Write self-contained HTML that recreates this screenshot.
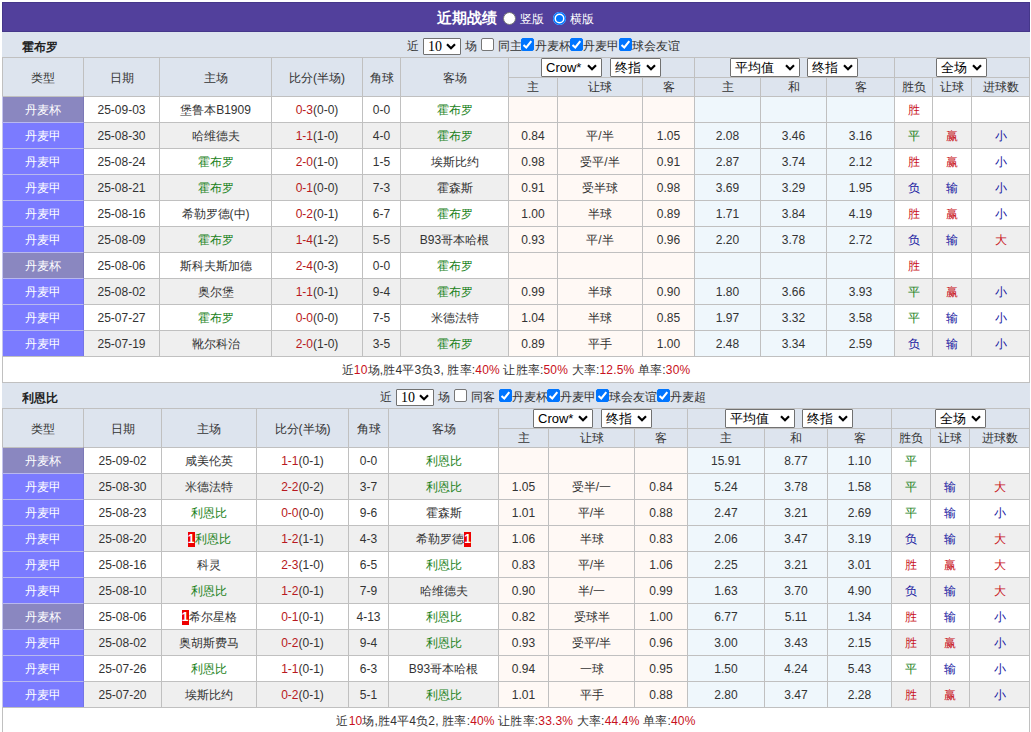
<!DOCTYPE html>
<html><head><meta charset="utf-8"><style>
html,body{margin:0;padding:0;background:#fff;width:1031px;height:732px;overflow:hidden;}
body{position:relative;font-family:"Liberation Sans",sans-serif;font-size:12px;color:#333;}
body>div,.abs{position:absolute;box-sizing:border-box;text-align:center;white-space:nowrap;overflow:hidden;}
.t{text-align:left!important;line-height:17px;overflow:visible!important;}
.sel{background:#fff;border:1px solid #717171;border-radius:1px;text-align:left!important;font-size:13px;color:#000;line-height:16px;}
.sel .st{position:absolute;left:4px;top:0;}
.sel .chev{position:absolute;right:4px;top:5px;}
.sel.sm .chev{top:4px;}
.sel .st{top:1px!important;}
.mono{font-family:"Liberation Serif",serif;font-size:14px;position:relative;top:-1px;}
.cb{width:13px;height:13px;border:1px solid #767676;border-radius:2px;background:#fff;}
.cb.on{background:#0075ff;border-color:#0075ff;}
.cb svg{position:absolute;left:-1px;top:-1px;}
.radio{width:13px;height:13px;border-radius:50%;background:#fff;border:1px solid #767676;}
.radio.on{border:none;background:#0075ff;box-shadow:inset 0 0 0 1.5px #0075ff, inset 0 0 0 3px #fff;}
.c{font-size:12px;}
.t.ttl .c{font-size:14.5px;}
.nm .c{font-size:12px;}
.t .c{font-size:12px;}
.sel .c{font-size:13px;}
.rc{display:inline-block;background:#e00;color:#fff;width:7px;height:15px;line-height:15px;font-size:12px;vertical-align:middle;font-weight:bold;text-align:center;}
</style></head><body>
<div style="left:2px;top:2px;width:1028px;height:30px;background:#52409c;border:1px solid #45378a;"></div><div style="left:2px;top:32px;width:1028px;height:1px;background:#e4e6fa;"></div><div class="t ttl" style="left:437px;top:9px;font-size:15px;font-weight:bold;color:#fff;line-height:18px"><span class="c">近期战绩</span></div><div class="radio" style="left:503px;top:12px;"></div><div class="t" style="left:520px;top:11px;color:#fff;"><span class="c">竖版</span></div><div class="radio on" style="left:553px;top:12px;"></div><div class="t" style="left:570px;top:11px;color:#fff;"><span class="c">横版</span></div><div style="left:2px;top:32px;width:1028px;height:25px;background:#dde4ee;"></div><div style="left:22px;top:32px;width:100px;height:25px;font-weight:bold;line-height:31px;color:#222;text-align:left;"><span class="nm"><span class="c">霍布罗</span></span></div><div style="left:2px;top:57px;width:82px;height:40px;background:#dde4ee;border:1px solid #c0c0c0;line-height:40px;"><span class="c">类型</span></div><div style="left:83px;top:57px;width:77px;height:40px;background:#dde4ee;border:1px solid #c0c0c0;line-height:40px;"><span class="c">日期</span></div><div style="left:159px;top:57px;width:113px;height:40px;background:#dde4ee;border:1px solid #c0c0c0;line-height:40px;"><span class="c">主场</span></div><div style="left:271px;top:57px;width:92px;height:40px;background:#dde4ee;border:1px solid #c0c0c0;line-height:40px;"><span class="c">比分</span>(<span class="c">半场</span>)</div><div style="left:362px;top:57px;width:39px;height:40px;background:#dde4ee;border:1px solid #c0c0c0;line-height:40px;"><span class="c">角球</span></div><div style="left:400px;top:57px;width:109px;height:40px;background:#dde4ee;border:1px solid #c0c0c0;line-height:40px;"><span class="c">客场</span></div><div style="left:508px;top:57px;width:187px;height:21px;background:#dde4ee;border:1px solid #c0c0c0;line-height:21px;"></div><div style="left:694px;top:57px;width:201px;height:21px;background:#dde4ee;border:1px solid #c0c0c0;line-height:21px;"></div><div style="left:894px;top:57px;width:136px;height:21px;background:#dde4ee;border:1px solid #c0c0c0;line-height:21px;"></div><div style="left:508px;top:77px;width:50px;height:20px;background:#dde4ee;border:1px solid #c0c0c0;line-height:20px;line-height:19px;"><span class="c">主</span></div><div style="left:557px;top:77px;width:86px;height:20px;background:#dde4ee;border:1px solid #c0c0c0;line-height:20px;line-height:19px;"><span class="c">让球</span></div><div style="left:642px;top:77px;width:53px;height:20px;background:#dde4ee;border:1px solid #c0c0c0;line-height:20px;line-height:19px;"><span class="c">客</span></div><div style="left:694px;top:77px;width:67px;height:20px;background:#dde4ee;border:1px solid #c0c0c0;line-height:20px;line-height:19px;"><span class="c">主</span></div><div style="left:760px;top:77px;width:67px;height:20px;background:#dde4ee;border:1px solid #c0c0c0;line-height:20px;line-height:19px;"><span class="c">和</span></div><div style="left:826px;top:77px;width:69px;height:20px;background:#dde4ee;border:1px solid #c0c0c0;line-height:20px;line-height:19px;"><span class="c">客</span></div><div style="left:894px;top:77px;width:39px;height:20px;background:#dde4ee;border:1px solid #c0c0c0;line-height:20px;line-height:19px;"><span class="c">胜负</span></div><div style="left:932px;top:77px;width:40px;height:20px;background:#dde4ee;border:1px solid #c0c0c0;line-height:20px;line-height:19px;"><span class="c">让球</span></div><div style="left:971px;top:77px;width:59px;height:20px;background:#dde4ee;border:1px solid #c0c0c0;line-height:20px;line-height:19px;"><span class="c">进球数</span></div><div style="left:83px;top:96px;width:77px;height:27px;background:#ffffff;border:1px solid #c0c0c0;line-height:27px;">25-09-03</div><div style="left:2px;top:96px;width:82px;height:27px;background:#8a87c0;border:1px solid #c0c0c0;line-height:27px;color:#fff;border-color:#c0c0c0 #7c79b6 #b8b8ee #c4c4ee;"><span class="c">丹麦杯</span></div><div style="left:159px;top:96px;width:113px;height:27px;background:#ffffff;border:1px solid #c0c0c0;line-height:27px;"><span class="c">堡鲁本</span>B1909</div><div style="left:271px;top:96px;width:92px;height:27px;background:#ffffff;border:1px solid #c0c0c0;line-height:27px;"><span style="color:#b81820">0-3</span>(0-0)</div><div style="left:362px;top:96px;width:39px;height:27px;background:#ffffff;border:1px solid #c0c0c0;line-height:27px;">0-0</div><div style="left:400px;top:96px;width:109px;height:27px;background:#ffffff;border:1px solid #c0c0c0;line-height:27px;"><span style="color:#1a821a"><span class="c">霍布罗</span></span></div><div style="left:508px;top:96px;width:50px;height:27px;background:#fff9f5;border:1px solid #c0c0c0;line-height:27px;"></div><div style="left:557px;top:96px;width:86px;height:27px;background:#fff9f5;border:1px solid #c0c0c0;line-height:27px;"></div><div style="left:642px;top:96px;width:53px;height:27px;background:#fff9f5;border:1px solid #c0c0c0;line-height:27px;"></div><div style="left:694px;top:96px;width:67px;height:27px;background:#eff7fc;border:1px solid #c0c0c0;line-height:27px;"></div><div style="left:760px;top:96px;width:67px;height:27px;background:#eff7fc;border:1px solid #c0c0c0;line-height:27px;"></div><div style="left:826px;top:96px;width:69px;height:27px;background:#eff7fc;border:1px solid #c0c0c0;line-height:27px;"></div><div style="left:894px;top:96px;width:39px;height:27px;background:#ffffff;border:1px solid #c0c0c0;line-height:27px;"><span style="color:#c81020"><span class="c">胜</span></span></div><div style="left:932px;top:96px;width:40px;height:27px;background:#ffffff;border:1px solid #c0c0c0;line-height:27px;"></div><div style="left:971px;top:96px;width:59px;height:27px;background:#ffffff;border:1px solid #c0c0c0;line-height:27px;"></div><div style="left:83px;top:122px;width:77px;height:27px;background:#efefef;border:1px solid #c0c0c0;line-height:27px;">25-08-30</div><div style="left:2px;top:122px;width:82px;height:27px;background:#7b7bff;border:1px solid #c0c0c0;line-height:27px;color:#fff;border-color:#b8b8ee #7474e6 #b8b8ee #c4c4ee;"><span class="c">丹麦甲</span></div><div style="left:159px;top:122px;width:113px;height:27px;background:#efefef;border:1px solid #c0c0c0;line-height:27px;"><span class="c">哈维德夫</span></div><div style="left:271px;top:122px;width:92px;height:27px;background:#efefef;border:1px solid #c0c0c0;line-height:27px;"><span style="color:#b81820">1-1</span>(1-0)</div><div style="left:362px;top:122px;width:39px;height:27px;background:#efefef;border:1px solid #c0c0c0;line-height:27px;">4-0</div><div style="left:400px;top:122px;width:109px;height:27px;background:#efefef;border:1px solid #c0c0c0;line-height:27px;"><span style="color:#1a821a"><span class="c">霍布罗</span></span></div><div style="left:508px;top:122px;width:50px;height:27px;background:#fff9f5;border:1px solid #c0c0c0;line-height:27px;">0.84</div><div style="left:557px;top:122px;width:86px;height:27px;background:#fff9f5;border:1px solid #c0c0c0;line-height:27px;"><span class="c">平</span>/<span class="c">半</span></div><div style="left:642px;top:122px;width:53px;height:27px;background:#fff9f5;border:1px solid #c0c0c0;line-height:27px;">1.05</div><div style="left:694px;top:122px;width:67px;height:27px;background:#eff7fc;border:1px solid #c0c0c0;line-height:27px;">2.08</div><div style="left:760px;top:122px;width:67px;height:27px;background:#eff7fc;border:1px solid #c0c0c0;line-height:27px;">3.46</div><div style="left:826px;top:122px;width:69px;height:27px;background:#eff7fc;border:1px solid #c0c0c0;line-height:27px;">3.16</div><div style="left:894px;top:122px;width:39px;height:27px;background:#efefef;border:1px solid #c0c0c0;line-height:27px;"><span style="color:#1a821a"><span class="c">平</span></span></div><div style="left:932px;top:122px;width:40px;height:27px;background:#efefef;border:1px solid #c0c0c0;line-height:27px;"><span style="color:#c81020"><span class="c">赢</span></span></div><div style="left:971px;top:122px;width:59px;height:27px;background:#efefef;border:1px solid #c0c0c0;line-height:27px;"><span style="color:#1515a0"><span class="c">小</span></span></div><div style="left:83px;top:148px;width:77px;height:27px;background:#ffffff;border:1px solid #c0c0c0;line-height:27px;">25-08-24</div><div style="left:2px;top:148px;width:82px;height:27px;background:#7b7bff;border:1px solid #c0c0c0;line-height:27px;color:#fff;border-color:#b8b8ee #7474e6 #b8b8ee #c4c4ee;"><span class="c">丹麦甲</span></div><div style="left:159px;top:148px;width:113px;height:27px;background:#ffffff;border:1px solid #c0c0c0;line-height:27px;"><span style="color:#1a821a"><span class="c">霍布罗</span></span></div><div style="left:271px;top:148px;width:92px;height:27px;background:#ffffff;border:1px solid #c0c0c0;line-height:27px;"><span style="color:#b81820">2-0</span>(1-0)</div><div style="left:362px;top:148px;width:39px;height:27px;background:#ffffff;border:1px solid #c0c0c0;line-height:27px;">1-5</div><div style="left:400px;top:148px;width:109px;height:27px;background:#ffffff;border:1px solid #c0c0c0;line-height:27px;"><span class="c">埃斯比约</span></div><div style="left:508px;top:148px;width:50px;height:27px;background:#fff9f5;border:1px solid #c0c0c0;line-height:27px;">0.98</div><div style="left:557px;top:148px;width:86px;height:27px;background:#fff9f5;border:1px solid #c0c0c0;line-height:27px;"><span class="c">受平</span>/<span class="c">半</span></div><div style="left:642px;top:148px;width:53px;height:27px;background:#fff9f5;border:1px solid #c0c0c0;line-height:27px;">0.91</div><div style="left:694px;top:148px;width:67px;height:27px;background:#eff7fc;border:1px solid #c0c0c0;line-height:27px;">2.87</div><div style="left:760px;top:148px;width:67px;height:27px;background:#eff7fc;border:1px solid #c0c0c0;line-height:27px;">3.74</div><div style="left:826px;top:148px;width:69px;height:27px;background:#eff7fc;border:1px solid #c0c0c0;line-height:27px;">2.12</div><div style="left:894px;top:148px;width:39px;height:27px;background:#ffffff;border:1px solid #c0c0c0;line-height:27px;"><span style="color:#c81020"><span class="c">胜</span></span></div><div style="left:932px;top:148px;width:40px;height:27px;background:#ffffff;border:1px solid #c0c0c0;line-height:27px;"><span style="color:#c81020"><span class="c">赢</span></span></div><div style="left:971px;top:148px;width:59px;height:27px;background:#ffffff;border:1px solid #c0c0c0;line-height:27px;"><span style="color:#1515a0"><span class="c">小</span></span></div><div style="left:83px;top:174px;width:77px;height:27px;background:#efefef;border:1px solid #c0c0c0;line-height:27px;">25-08-21</div><div style="left:2px;top:174px;width:82px;height:27px;background:#7b7bff;border:1px solid #c0c0c0;line-height:27px;color:#fff;border-color:#b8b8ee #7474e6 #b8b8ee #c4c4ee;"><span class="c">丹麦甲</span></div><div style="left:159px;top:174px;width:113px;height:27px;background:#efefef;border:1px solid #c0c0c0;line-height:27px;"><span style="color:#1a821a"><span class="c">霍布罗</span></span></div><div style="left:271px;top:174px;width:92px;height:27px;background:#efefef;border:1px solid #c0c0c0;line-height:27px;"><span style="color:#b81820">0-1</span>(0-0)</div><div style="left:362px;top:174px;width:39px;height:27px;background:#efefef;border:1px solid #c0c0c0;line-height:27px;">7-3</div><div style="left:400px;top:174px;width:109px;height:27px;background:#efefef;border:1px solid #c0c0c0;line-height:27px;"><span class="c">霍森斯</span></div><div style="left:508px;top:174px;width:50px;height:27px;background:#fff9f5;border:1px solid #c0c0c0;line-height:27px;">0.91</div><div style="left:557px;top:174px;width:86px;height:27px;background:#fff9f5;border:1px solid #c0c0c0;line-height:27px;"><span class="c">受半球</span></div><div style="left:642px;top:174px;width:53px;height:27px;background:#fff9f5;border:1px solid #c0c0c0;line-height:27px;">0.98</div><div style="left:694px;top:174px;width:67px;height:27px;background:#eff7fc;border:1px solid #c0c0c0;line-height:27px;">3.69</div><div style="left:760px;top:174px;width:67px;height:27px;background:#eff7fc;border:1px solid #c0c0c0;line-height:27px;">3.29</div><div style="left:826px;top:174px;width:69px;height:27px;background:#eff7fc;border:1px solid #c0c0c0;line-height:27px;">1.95</div><div style="left:894px;top:174px;width:39px;height:27px;background:#efefef;border:1px solid #c0c0c0;line-height:27px;"><span style="color:#1515a0"><span class="c">负</span></span></div><div style="left:932px;top:174px;width:40px;height:27px;background:#efefef;border:1px solid #c0c0c0;line-height:27px;"><span style="color:#1515a0"><span class="c">输</span></span></div><div style="left:971px;top:174px;width:59px;height:27px;background:#efefef;border:1px solid #c0c0c0;line-height:27px;"><span style="color:#1515a0"><span class="c">小</span></span></div><div style="left:83px;top:200px;width:77px;height:27px;background:#ffffff;border:1px solid #c0c0c0;line-height:27px;">25-08-16</div><div style="left:2px;top:200px;width:82px;height:27px;background:#7b7bff;border:1px solid #c0c0c0;line-height:27px;color:#fff;border-color:#b8b8ee #7474e6 #b8b8ee #c4c4ee;"><span class="c">丹麦甲</span></div><div style="left:159px;top:200px;width:113px;height:27px;background:#ffffff;border:1px solid #c0c0c0;line-height:27px;"><span class="c">希勒罗德</span>(<span class="c">中</span>)</div><div style="left:271px;top:200px;width:92px;height:27px;background:#ffffff;border:1px solid #c0c0c0;line-height:27px;"><span style="color:#b81820">0-2</span>(0-1)</div><div style="left:362px;top:200px;width:39px;height:27px;background:#ffffff;border:1px solid #c0c0c0;line-height:27px;">6-7</div><div style="left:400px;top:200px;width:109px;height:27px;background:#ffffff;border:1px solid #c0c0c0;line-height:27px;"><span style="color:#1a821a"><span class="c">霍布罗</span></span></div><div style="left:508px;top:200px;width:50px;height:27px;background:#fff9f5;border:1px solid #c0c0c0;line-height:27px;">1.00</div><div style="left:557px;top:200px;width:86px;height:27px;background:#fff9f5;border:1px solid #c0c0c0;line-height:27px;"><span class="c">半球</span></div><div style="left:642px;top:200px;width:53px;height:27px;background:#fff9f5;border:1px solid #c0c0c0;line-height:27px;">0.89</div><div style="left:694px;top:200px;width:67px;height:27px;background:#eff7fc;border:1px solid #c0c0c0;line-height:27px;">1.71</div><div style="left:760px;top:200px;width:67px;height:27px;background:#eff7fc;border:1px solid #c0c0c0;line-height:27px;">3.84</div><div style="left:826px;top:200px;width:69px;height:27px;background:#eff7fc;border:1px solid #c0c0c0;line-height:27px;">4.19</div><div style="left:894px;top:200px;width:39px;height:27px;background:#ffffff;border:1px solid #c0c0c0;line-height:27px;"><span style="color:#c81020"><span class="c">胜</span></span></div><div style="left:932px;top:200px;width:40px;height:27px;background:#ffffff;border:1px solid #c0c0c0;line-height:27px;"><span style="color:#c81020"><span class="c">赢</span></span></div><div style="left:971px;top:200px;width:59px;height:27px;background:#ffffff;border:1px solid #c0c0c0;line-height:27px;"><span style="color:#1515a0"><span class="c">小</span></span></div><div style="left:83px;top:226px;width:77px;height:27px;background:#efefef;border:1px solid #c0c0c0;line-height:27px;">25-08-09</div><div style="left:2px;top:226px;width:82px;height:27px;background:#7b7bff;border:1px solid #c0c0c0;line-height:27px;color:#fff;border-color:#b8b8ee #7474e6 #b8b8ee #c4c4ee;"><span class="c">丹麦甲</span></div><div style="left:159px;top:226px;width:113px;height:27px;background:#efefef;border:1px solid #c0c0c0;line-height:27px;"><span style="color:#1a821a"><span class="c">霍布罗</span></span></div><div style="left:271px;top:226px;width:92px;height:27px;background:#efefef;border:1px solid #c0c0c0;line-height:27px;"><span style="color:#b81820">1-4</span>(1-2)</div><div style="left:362px;top:226px;width:39px;height:27px;background:#efefef;border:1px solid #c0c0c0;line-height:27px;">5-5</div><div style="left:400px;top:226px;width:109px;height:27px;background:#efefef;border:1px solid #c0c0c0;line-height:27px;">B93<span class="c">哥本哈根</span></div><div style="left:508px;top:226px;width:50px;height:27px;background:#fff9f5;border:1px solid #c0c0c0;line-height:27px;">0.93</div><div style="left:557px;top:226px;width:86px;height:27px;background:#fff9f5;border:1px solid #c0c0c0;line-height:27px;"><span class="c">平</span>/<span class="c">半</span></div><div style="left:642px;top:226px;width:53px;height:27px;background:#fff9f5;border:1px solid #c0c0c0;line-height:27px;">0.96</div><div style="left:694px;top:226px;width:67px;height:27px;background:#eff7fc;border:1px solid #c0c0c0;line-height:27px;">2.20</div><div style="left:760px;top:226px;width:67px;height:27px;background:#eff7fc;border:1px solid #c0c0c0;line-height:27px;">3.78</div><div style="left:826px;top:226px;width:69px;height:27px;background:#eff7fc;border:1px solid #c0c0c0;line-height:27px;">2.72</div><div style="left:894px;top:226px;width:39px;height:27px;background:#efefef;border:1px solid #c0c0c0;line-height:27px;"><span style="color:#1515a0"><span class="c">负</span></span></div><div style="left:932px;top:226px;width:40px;height:27px;background:#efefef;border:1px solid #c0c0c0;line-height:27px;"><span style="color:#1515a0"><span class="c">输</span></span></div><div style="left:971px;top:226px;width:59px;height:27px;background:#efefef;border:1px solid #c0c0c0;line-height:27px;"><span style="color:#c81020"><span class="c">大</span></span></div><div style="left:83px;top:252px;width:77px;height:27px;background:#ffffff;border:1px solid #c0c0c0;line-height:27px;">25-08-06</div><div style="left:2px;top:252px;width:82px;height:27px;background:#8a87c0;border:1px solid #c0c0c0;line-height:27px;color:#fff;border-color:#b8b8ee #7c79b6 #b8b8ee #c4c4ee;"><span class="c">丹麦杯</span></div><div style="left:159px;top:252px;width:113px;height:27px;background:#ffffff;border:1px solid #c0c0c0;line-height:27px;"><span class="c">斯科夫斯加德</span></div><div style="left:271px;top:252px;width:92px;height:27px;background:#ffffff;border:1px solid #c0c0c0;line-height:27px;"><span style="color:#b81820">2-4</span>(0-3)</div><div style="left:362px;top:252px;width:39px;height:27px;background:#ffffff;border:1px solid #c0c0c0;line-height:27px;">0-0</div><div style="left:400px;top:252px;width:109px;height:27px;background:#ffffff;border:1px solid #c0c0c0;line-height:27px;"><span style="color:#1a821a"><span class="c">霍布罗</span></span></div><div style="left:508px;top:252px;width:50px;height:27px;background:#fff9f5;border:1px solid #c0c0c0;line-height:27px;"></div><div style="left:557px;top:252px;width:86px;height:27px;background:#fff9f5;border:1px solid #c0c0c0;line-height:27px;"></div><div style="left:642px;top:252px;width:53px;height:27px;background:#fff9f5;border:1px solid #c0c0c0;line-height:27px;"></div><div style="left:694px;top:252px;width:67px;height:27px;background:#eff7fc;border:1px solid #c0c0c0;line-height:27px;"></div><div style="left:760px;top:252px;width:67px;height:27px;background:#eff7fc;border:1px solid #c0c0c0;line-height:27px;"></div><div style="left:826px;top:252px;width:69px;height:27px;background:#eff7fc;border:1px solid #c0c0c0;line-height:27px;"></div><div style="left:894px;top:252px;width:39px;height:27px;background:#ffffff;border:1px solid #c0c0c0;line-height:27px;"><span style="color:#c81020"><span class="c">胜</span></span></div><div style="left:932px;top:252px;width:40px;height:27px;background:#ffffff;border:1px solid #c0c0c0;line-height:27px;"></div><div style="left:971px;top:252px;width:59px;height:27px;background:#ffffff;border:1px solid #c0c0c0;line-height:27px;"></div><div style="left:83px;top:278px;width:77px;height:27px;background:#efefef;border:1px solid #c0c0c0;line-height:27px;">25-08-02</div><div style="left:2px;top:278px;width:82px;height:27px;background:#7b7bff;border:1px solid #c0c0c0;line-height:27px;color:#fff;border-color:#b8b8ee #7474e6 #b8b8ee #c4c4ee;"><span class="c">丹麦甲</span></div><div style="left:159px;top:278px;width:113px;height:27px;background:#efefef;border:1px solid #c0c0c0;line-height:27px;"><span class="c">奥尔堡</span></div><div style="left:271px;top:278px;width:92px;height:27px;background:#efefef;border:1px solid #c0c0c0;line-height:27px;"><span style="color:#b81820">1-1</span>(0-1)</div><div style="left:362px;top:278px;width:39px;height:27px;background:#efefef;border:1px solid #c0c0c0;line-height:27px;">9-4</div><div style="left:400px;top:278px;width:109px;height:27px;background:#efefef;border:1px solid #c0c0c0;line-height:27px;"><span style="color:#1a821a"><span class="c">霍布罗</span></span></div><div style="left:508px;top:278px;width:50px;height:27px;background:#fff9f5;border:1px solid #c0c0c0;line-height:27px;">0.99</div><div style="left:557px;top:278px;width:86px;height:27px;background:#fff9f5;border:1px solid #c0c0c0;line-height:27px;"><span class="c">半球</span></div><div style="left:642px;top:278px;width:53px;height:27px;background:#fff9f5;border:1px solid #c0c0c0;line-height:27px;">0.90</div><div style="left:694px;top:278px;width:67px;height:27px;background:#eff7fc;border:1px solid #c0c0c0;line-height:27px;">1.80</div><div style="left:760px;top:278px;width:67px;height:27px;background:#eff7fc;border:1px solid #c0c0c0;line-height:27px;">3.66</div><div style="left:826px;top:278px;width:69px;height:27px;background:#eff7fc;border:1px solid #c0c0c0;line-height:27px;">3.93</div><div style="left:894px;top:278px;width:39px;height:27px;background:#efefef;border:1px solid #c0c0c0;line-height:27px;"><span style="color:#1a821a"><span class="c">平</span></span></div><div style="left:932px;top:278px;width:40px;height:27px;background:#efefef;border:1px solid #c0c0c0;line-height:27px;"><span style="color:#c81020"><span class="c">赢</span></span></div><div style="left:971px;top:278px;width:59px;height:27px;background:#efefef;border:1px solid #c0c0c0;line-height:27px;"><span style="color:#1515a0"><span class="c">小</span></span></div><div style="left:83px;top:304px;width:77px;height:27px;background:#ffffff;border:1px solid #c0c0c0;line-height:27px;">25-07-27</div><div style="left:2px;top:304px;width:82px;height:27px;background:#7b7bff;border:1px solid #c0c0c0;line-height:27px;color:#fff;border-color:#b8b8ee #7474e6 #b8b8ee #c4c4ee;"><span class="c">丹麦甲</span></div><div style="left:159px;top:304px;width:113px;height:27px;background:#ffffff;border:1px solid #c0c0c0;line-height:27px;"><span style="color:#1a821a"><span class="c">霍布罗</span></span></div><div style="left:271px;top:304px;width:92px;height:27px;background:#ffffff;border:1px solid #c0c0c0;line-height:27px;"><span style="color:#b81820">0-0</span>(0-0)</div><div style="left:362px;top:304px;width:39px;height:27px;background:#ffffff;border:1px solid #c0c0c0;line-height:27px;">7-5</div><div style="left:400px;top:304px;width:109px;height:27px;background:#ffffff;border:1px solid #c0c0c0;line-height:27px;"><span class="c">米德法特</span></div><div style="left:508px;top:304px;width:50px;height:27px;background:#fff9f5;border:1px solid #c0c0c0;line-height:27px;">1.04</div><div style="left:557px;top:304px;width:86px;height:27px;background:#fff9f5;border:1px solid #c0c0c0;line-height:27px;"><span class="c">半球</span></div><div style="left:642px;top:304px;width:53px;height:27px;background:#fff9f5;border:1px solid #c0c0c0;line-height:27px;">0.85</div><div style="left:694px;top:304px;width:67px;height:27px;background:#eff7fc;border:1px solid #c0c0c0;line-height:27px;">1.97</div><div style="left:760px;top:304px;width:67px;height:27px;background:#eff7fc;border:1px solid #c0c0c0;line-height:27px;">3.32</div><div style="left:826px;top:304px;width:69px;height:27px;background:#eff7fc;border:1px solid #c0c0c0;line-height:27px;">3.58</div><div style="left:894px;top:304px;width:39px;height:27px;background:#ffffff;border:1px solid #c0c0c0;line-height:27px;"><span style="color:#1a821a"><span class="c">平</span></span></div><div style="left:932px;top:304px;width:40px;height:27px;background:#ffffff;border:1px solid #c0c0c0;line-height:27px;"><span style="color:#1515a0"><span class="c">输</span></span></div><div style="left:971px;top:304px;width:59px;height:27px;background:#ffffff;border:1px solid #c0c0c0;line-height:27px;"><span style="color:#1515a0"><span class="c">小</span></span></div><div style="left:83px;top:330px;width:77px;height:27px;background:#efefef;border:1px solid #c0c0c0;line-height:27px;">25-07-19</div><div style="left:2px;top:330px;width:82px;height:27px;background:#7b7bff;border:1px solid #c0c0c0;line-height:27px;color:#fff;border-color:#b8b8ee #7474e6 #b8b8ee #c4c4ee;"><span class="c">丹麦甲</span></div><div style="left:159px;top:330px;width:113px;height:27px;background:#efefef;border:1px solid #c0c0c0;line-height:27px;"><span class="c">靴尔科治</span></div><div style="left:271px;top:330px;width:92px;height:27px;background:#efefef;border:1px solid #c0c0c0;line-height:27px;"><span style="color:#b81820">2-0</span>(1-0)</div><div style="left:362px;top:330px;width:39px;height:27px;background:#efefef;border:1px solid #c0c0c0;line-height:27px;">3-5</div><div style="left:400px;top:330px;width:109px;height:27px;background:#efefef;border:1px solid #c0c0c0;line-height:27px;"><span style="color:#1a821a"><span class="c">霍布罗</span></span></div><div style="left:508px;top:330px;width:50px;height:27px;background:#fff9f5;border:1px solid #c0c0c0;line-height:27px;">0.89</div><div style="left:557px;top:330px;width:86px;height:27px;background:#fff9f5;border:1px solid #c0c0c0;line-height:27px;"><span class="c">平手</span></div><div style="left:642px;top:330px;width:53px;height:27px;background:#fff9f5;border:1px solid #c0c0c0;line-height:27px;">1.00</div><div style="left:694px;top:330px;width:67px;height:27px;background:#eff7fc;border:1px solid #c0c0c0;line-height:27px;">2.48</div><div style="left:760px;top:330px;width:67px;height:27px;background:#eff7fc;border:1px solid #c0c0c0;line-height:27px;">3.34</div><div style="left:826px;top:330px;width:69px;height:27px;background:#eff7fc;border:1px solid #c0c0c0;line-height:27px;">2.59</div><div style="left:894px;top:330px;width:39px;height:27px;background:#efefef;border:1px solid #c0c0c0;line-height:27px;"><span style="color:#1515a0"><span class="c">负</span></span></div><div style="left:932px;top:330px;width:40px;height:27px;background:#efefef;border:1px solid #c0c0c0;line-height:27px;"><span style="color:#1515a0"><span class="c">输</span></span></div><div style="left:971px;top:330px;width:59px;height:27px;background:#efefef;border:1px solid #c0c0c0;line-height:27px;"><span style="color:#1515a0"><span class="c">小</span></span></div><div style="left:2px;top:356px;width:1028px;height:27px;background:#fff;border:1px solid #c0c0c0;line-height:27px;letter-spacing:0.18px;"><span class="c">近</span><span style="color:#c81020">10</span><span class="c">场</span>,<span class="c">胜</span>4<span class="c">平</span>3<span class="c">负</span>3, <span class="c">胜率</span>:<span style="color:#c81020">40%</span> <span class="c">让胜率</span>:<span style="color:#c81020">50%</span> <span class="c">大率</span>:<span style="color:#c81020">12.5%</span> <span class="c">单率</span>:<span style="color:#c81020">30%</span></div><div class="t" style="left:407px;top:38px;"><span class="c">近</span></div><div class="sel sm" style="left:423px;top:38px;width:38px;height:17px;"><span class="st"><span class="mono">10</span></span><svg class="chev" width="10" height="7" viewBox="0 0 10 7"><path d="M1 1.3 L5 5.2 L9 1.3" stroke="#000" stroke-width="2.2" fill="none"/></svg></div><div class="t" style="left:465px;top:38px;"><span class="c">场</span></div><div class="cb" style="left:481px;top:38px;"></div><div class="t" style="left:498px;top:38px;"><span class="c">同主</span></div><div class="cb on" style="left:521px;top:38px;"><svg width="13" height="13" viewBox="0 0 13 13"><path d="M2.5 7 L5.3 9.5 L10.3 3.2" stroke="#fff" stroke-width="2.1" fill="none"/></svg></div><div class="t" style="left:535px;top:38px;"><span class="c">丹麦杯</span></div><div class="cb on" style="left:570px;top:38px;"><svg width="13" height="13" viewBox="0 0 13 13"><path d="M2.5 7 L5.3 9.5 L10.3 3.2" stroke="#fff" stroke-width="2.1" fill="none"/></svg></div><div class="t" style="left:583px;top:38px;"><span class="c">丹麦甲</span></div><div class="cb on" style="left:619px;top:38px;"><svg width="13" height="13" viewBox="0 0 13 13"><path d="M2.5 7 L5.3 9.5 L10.3 3.2" stroke="#fff" stroke-width="2.1" fill="none"/></svg></div><div class="t" style="left:632px;top:38px;"><span class="c">球会友谊</span></div><div class="sel" style="left:541px;top:58px;width:61px;height:19px;"><span class="st">Crow*</span><svg class="chev" width="10" height="7" viewBox="0 0 10 7"><path d="M1 1.3 L5 5.2 L9 1.3" stroke="#000" stroke-width="2.2" fill="none"/></svg></div><div class="sel" style="left:610px;top:58px;width:51px;height:19px;"><span class="st"><span class="c">终指</span></span><svg class="chev" width="10" height="7" viewBox="0 0 10 7"><path d="M1 1.3 L5 5.2 L9 1.3" stroke="#000" stroke-width="2.2" fill="none"/></svg></div><div class="sel" style="left:730px;top:58px;width:70px;height:19px;"><span class="st"><span class="c">平均值</span></span><svg class="chev" width="10" height="7" viewBox="0 0 10 7"><path d="M1 1.3 L5 5.2 L9 1.3" stroke="#000" stroke-width="2.2" fill="none"/></svg></div><div class="sel" style="left:807px;top:58px;width:51px;height:19px;"><span class="st"><span class="c">终指</span></span><svg class="chev" width="10" height="7" viewBox="0 0 10 7"><path d="M1 1.3 L5 5.2 L9 1.3" stroke="#000" stroke-width="2.2" fill="none"/></svg></div><div class="sel" style="left:936px;top:58px;width:51px;height:19px;"><span class="st"><span class="c">全场</span></span><svg class="chev" width="10" height="7" viewBox="0 0 10 7"><path d="M1 1.3 L5 5.2 L9 1.3" stroke="#000" stroke-width="2.2" fill="none"/></svg></div><div style="left:2px;top:383px;width:1028px;height:25px;background:#dde4ee;"></div><div style="left:22px;top:383px;width:100px;height:25px;font-weight:bold;line-height:31px;color:#222;text-align:left;"><span class="nm"><span class="c">利恩比</span></span></div><div style="left:2px;top:408px;width:82px;height:40px;background:#dde4ee;border:1px solid #c0c0c0;line-height:40px;"><span class="c">类型</span></div><div style="left:83px;top:408px;width:79px;height:40px;background:#dde4ee;border:1px solid #c0c0c0;line-height:40px;"><span class="c">日期</span></div><div style="left:161px;top:408px;width:96px;height:40px;background:#dde4ee;border:1px solid #c0c0c0;line-height:40px;"><span class="c">主场</span></div><div style="left:256px;top:408px;width:93px;height:40px;background:#dde4ee;border:1px solid #c0c0c0;line-height:40px;"><span class="c">比分</span>(<span class="c">半场</span>)</div><div style="left:348px;top:408px;width:41px;height:40px;background:#dde4ee;border:1px solid #c0c0c0;line-height:40px;"><span class="c">角球</span></div><div style="left:388px;top:408px;width:111px;height:40px;background:#dde4ee;border:1px solid #c0c0c0;line-height:40px;"><span class="c">客场</span></div><div style="left:498px;top:408px;width:190px;height:21px;background:#dde4ee;border:1px solid #c0c0c0;line-height:21px;"></div><div style="left:687px;top:408px;width:205px;height:21px;background:#dde4ee;border:1px solid #c0c0c0;line-height:21px;"></div><div style="left:891px;top:408px;width:139px;height:21px;background:#dde4ee;border:1px solid #c0c0c0;line-height:21px;"></div><div style="left:498px;top:428px;width:51px;height:20px;background:#dde4ee;border:1px solid #c0c0c0;line-height:20px;line-height:19px;"><span class="c">主</span></div><div style="left:548px;top:428px;width:87px;height:20px;background:#dde4ee;border:1px solid #c0c0c0;line-height:20px;line-height:19px;"><span class="c">让球</span></div><div style="left:634px;top:428px;width:54px;height:20px;background:#dde4ee;border:1px solid #c0c0c0;line-height:20px;line-height:19px;"><span class="c">客</span></div><div style="left:687px;top:428px;width:78px;height:20px;background:#dde4ee;border:1px solid #c0c0c0;line-height:20px;line-height:19px;"><span class="c">主</span></div><div style="left:764px;top:428px;width:64px;height:20px;background:#dde4ee;border:1px solid #c0c0c0;line-height:20px;line-height:19px;"><span class="c">和</span></div><div style="left:827px;top:428px;width:65px;height:20px;background:#dde4ee;border:1px solid #c0c0c0;line-height:20px;line-height:19px;"><span class="c">客</span></div><div style="left:891px;top:428px;width:40px;height:20px;background:#dde4ee;border:1px solid #c0c0c0;line-height:20px;line-height:19px;"><span class="c">胜负</span></div><div style="left:930px;top:428px;width:40px;height:20px;background:#dde4ee;border:1px solid #c0c0c0;line-height:20px;line-height:19px;"><span class="c">让球</span></div><div style="left:969px;top:428px;width:61px;height:20px;background:#dde4ee;border:1px solid #c0c0c0;line-height:20px;line-height:19px;"><span class="c">进球数</span></div><div style="left:83px;top:447px;width:79px;height:27px;background:#ffffff;border:1px solid #c0c0c0;line-height:27px;">25-09-02</div><div style="left:2px;top:447px;width:82px;height:27px;background:#8a87c0;border:1px solid #c0c0c0;line-height:27px;color:#fff;border-color:#c0c0c0 #7c79b6 #b8b8ee #c4c4ee;"><span class="c">丹麦杯</span></div><div style="left:161px;top:447px;width:96px;height:27px;background:#ffffff;border:1px solid #c0c0c0;line-height:27px;"><span class="c">咸美伦英</span></div><div style="left:256px;top:447px;width:93px;height:27px;background:#ffffff;border:1px solid #c0c0c0;line-height:27px;"><span style="color:#b81820">1-1</span>(0-1)</div><div style="left:348px;top:447px;width:41px;height:27px;background:#ffffff;border:1px solid #c0c0c0;line-height:27px;">0-0</div><div style="left:388px;top:447px;width:111px;height:27px;background:#ffffff;border:1px solid #c0c0c0;line-height:27px;"><span style="color:#1a821a"><span class="c">利恩比</span></span></div><div style="left:498px;top:447px;width:51px;height:27px;background:#fff9f5;border:1px solid #c0c0c0;line-height:27px;"></div><div style="left:548px;top:447px;width:87px;height:27px;background:#fff9f5;border:1px solid #c0c0c0;line-height:27px;"></div><div style="left:634px;top:447px;width:54px;height:27px;background:#fff9f5;border:1px solid #c0c0c0;line-height:27px;"></div><div style="left:687px;top:447px;width:78px;height:27px;background:#eff7fc;border:1px solid #c0c0c0;line-height:27px;">15.91</div><div style="left:764px;top:447px;width:64px;height:27px;background:#eff7fc;border:1px solid #c0c0c0;line-height:27px;">8.77</div><div style="left:827px;top:447px;width:65px;height:27px;background:#eff7fc;border:1px solid #c0c0c0;line-height:27px;">1.10</div><div style="left:891px;top:447px;width:40px;height:27px;background:#ffffff;border:1px solid #c0c0c0;line-height:27px;"><span style="color:#1a821a"><span class="c">平</span></span></div><div style="left:930px;top:447px;width:40px;height:27px;background:#ffffff;border:1px solid #c0c0c0;line-height:27px;"></div><div style="left:969px;top:447px;width:61px;height:27px;background:#ffffff;border:1px solid #c0c0c0;line-height:27px;"></div><div style="left:83px;top:473px;width:79px;height:27px;background:#efefef;border:1px solid #c0c0c0;line-height:27px;">25-08-30</div><div style="left:2px;top:473px;width:82px;height:27px;background:#7b7bff;border:1px solid #c0c0c0;line-height:27px;color:#fff;border-color:#b8b8ee #7474e6 #b8b8ee #c4c4ee;"><span class="c">丹麦甲</span></div><div style="left:161px;top:473px;width:96px;height:27px;background:#efefef;border:1px solid #c0c0c0;line-height:27px;"><span class="c">米德法特</span></div><div style="left:256px;top:473px;width:93px;height:27px;background:#efefef;border:1px solid #c0c0c0;line-height:27px;"><span style="color:#b81820">2-2</span>(0-2)</div><div style="left:348px;top:473px;width:41px;height:27px;background:#efefef;border:1px solid #c0c0c0;line-height:27px;">3-7</div><div style="left:388px;top:473px;width:111px;height:27px;background:#efefef;border:1px solid #c0c0c0;line-height:27px;"><span style="color:#1a821a"><span class="c">利恩比</span></span></div><div style="left:498px;top:473px;width:51px;height:27px;background:#fff9f5;border:1px solid #c0c0c0;line-height:27px;">1.05</div><div style="left:548px;top:473px;width:87px;height:27px;background:#fff9f5;border:1px solid #c0c0c0;line-height:27px;"><span class="c">受半</span>/<span class="c">一</span></div><div style="left:634px;top:473px;width:54px;height:27px;background:#fff9f5;border:1px solid #c0c0c0;line-height:27px;">0.84</div><div style="left:687px;top:473px;width:78px;height:27px;background:#eff7fc;border:1px solid #c0c0c0;line-height:27px;">5.24</div><div style="left:764px;top:473px;width:64px;height:27px;background:#eff7fc;border:1px solid #c0c0c0;line-height:27px;">3.78</div><div style="left:827px;top:473px;width:65px;height:27px;background:#eff7fc;border:1px solid #c0c0c0;line-height:27px;">1.58</div><div style="left:891px;top:473px;width:40px;height:27px;background:#efefef;border:1px solid #c0c0c0;line-height:27px;"><span style="color:#1a821a"><span class="c">平</span></span></div><div style="left:930px;top:473px;width:40px;height:27px;background:#efefef;border:1px solid #c0c0c0;line-height:27px;"><span style="color:#1515a0"><span class="c">输</span></span></div><div style="left:969px;top:473px;width:61px;height:27px;background:#efefef;border:1px solid #c0c0c0;line-height:27px;"><span style="color:#c81020"><span class="c">大</span></span></div><div style="left:83px;top:499px;width:79px;height:27px;background:#ffffff;border:1px solid #c0c0c0;line-height:27px;">25-08-23</div><div style="left:2px;top:499px;width:82px;height:27px;background:#7b7bff;border:1px solid #c0c0c0;line-height:27px;color:#fff;border-color:#b8b8ee #7474e6 #b8b8ee #c4c4ee;"><span class="c">丹麦甲</span></div><div style="left:161px;top:499px;width:96px;height:27px;background:#ffffff;border:1px solid #c0c0c0;line-height:27px;"><span style="color:#1a821a"><span class="c">利恩比</span></span></div><div style="left:256px;top:499px;width:93px;height:27px;background:#ffffff;border:1px solid #c0c0c0;line-height:27px;"><span style="color:#b81820">0-0</span>(0-0)</div><div style="left:348px;top:499px;width:41px;height:27px;background:#ffffff;border:1px solid #c0c0c0;line-height:27px;">9-6</div><div style="left:388px;top:499px;width:111px;height:27px;background:#ffffff;border:1px solid #c0c0c0;line-height:27px;"><span class="c">霍森斯</span></div><div style="left:498px;top:499px;width:51px;height:27px;background:#fff9f5;border:1px solid #c0c0c0;line-height:27px;">1.01</div><div style="left:548px;top:499px;width:87px;height:27px;background:#fff9f5;border:1px solid #c0c0c0;line-height:27px;"><span class="c">平</span>/<span class="c">半</span></div><div style="left:634px;top:499px;width:54px;height:27px;background:#fff9f5;border:1px solid #c0c0c0;line-height:27px;">0.88</div><div style="left:687px;top:499px;width:78px;height:27px;background:#eff7fc;border:1px solid #c0c0c0;line-height:27px;">2.47</div><div style="left:764px;top:499px;width:64px;height:27px;background:#eff7fc;border:1px solid #c0c0c0;line-height:27px;">3.21</div><div style="left:827px;top:499px;width:65px;height:27px;background:#eff7fc;border:1px solid #c0c0c0;line-height:27px;">2.69</div><div style="left:891px;top:499px;width:40px;height:27px;background:#ffffff;border:1px solid #c0c0c0;line-height:27px;"><span style="color:#1a821a"><span class="c">平</span></span></div><div style="left:930px;top:499px;width:40px;height:27px;background:#ffffff;border:1px solid #c0c0c0;line-height:27px;"><span style="color:#1515a0"><span class="c">输</span></span></div><div style="left:969px;top:499px;width:61px;height:27px;background:#ffffff;border:1px solid #c0c0c0;line-height:27px;"><span style="color:#1515a0"><span class="c">小</span></span></div><div style="left:83px;top:525px;width:79px;height:27px;background:#efefef;border:1px solid #c0c0c0;line-height:27px;">25-08-20</div><div style="left:2px;top:525px;width:82px;height:27px;background:#7b7bff;border:1px solid #c0c0c0;line-height:27px;color:#fff;border-color:#b8b8ee #7474e6 #b8b8ee #c4c4ee;"><span class="c">丹麦甲</span></div><div style="left:161px;top:525px;width:96px;height:27px;background:#efefef;border:1px solid #c0c0c0;line-height:27px;"><b class="rc">1</b><span style="color:#1a821a"><span class="c">利恩比</span></span></div><div style="left:256px;top:525px;width:93px;height:27px;background:#efefef;border:1px solid #c0c0c0;line-height:27px;"><span style="color:#b81820">1-2</span>(1-1)</div><div style="left:348px;top:525px;width:41px;height:27px;background:#efefef;border:1px solid #c0c0c0;line-height:27px;">4-3</div><div style="left:388px;top:525px;width:111px;height:27px;background:#efefef;border:1px solid #c0c0c0;line-height:27px;"><span class="c">希勒罗德</span><b class="rc">1</b></div><div style="left:498px;top:525px;width:51px;height:27px;background:#fff9f5;border:1px solid #c0c0c0;line-height:27px;">1.06</div><div style="left:548px;top:525px;width:87px;height:27px;background:#fff9f5;border:1px solid #c0c0c0;line-height:27px;"><span class="c">半球</span></div><div style="left:634px;top:525px;width:54px;height:27px;background:#fff9f5;border:1px solid #c0c0c0;line-height:27px;">0.83</div><div style="left:687px;top:525px;width:78px;height:27px;background:#eff7fc;border:1px solid #c0c0c0;line-height:27px;">2.06</div><div style="left:764px;top:525px;width:64px;height:27px;background:#eff7fc;border:1px solid #c0c0c0;line-height:27px;">3.47</div><div style="left:827px;top:525px;width:65px;height:27px;background:#eff7fc;border:1px solid #c0c0c0;line-height:27px;">3.19</div><div style="left:891px;top:525px;width:40px;height:27px;background:#efefef;border:1px solid #c0c0c0;line-height:27px;"><span style="color:#1515a0"><span class="c">负</span></span></div><div style="left:930px;top:525px;width:40px;height:27px;background:#efefef;border:1px solid #c0c0c0;line-height:27px;"><span style="color:#1515a0"><span class="c">输</span></span></div><div style="left:969px;top:525px;width:61px;height:27px;background:#efefef;border:1px solid #c0c0c0;line-height:27px;"><span style="color:#c81020"><span class="c">大</span></span></div><div style="left:83px;top:551px;width:79px;height:27px;background:#ffffff;border:1px solid #c0c0c0;line-height:27px;">25-08-16</div><div style="left:2px;top:551px;width:82px;height:27px;background:#7b7bff;border:1px solid #c0c0c0;line-height:27px;color:#fff;border-color:#b8b8ee #7474e6 #b8b8ee #c4c4ee;"><span class="c">丹麦甲</span></div><div style="left:161px;top:551px;width:96px;height:27px;background:#ffffff;border:1px solid #c0c0c0;line-height:27px;"><span class="c">科灵</span></div><div style="left:256px;top:551px;width:93px;height:27px;background:#ffffff;border:1px solid #c0c0c0;line-height:27px;"><span style="color:#b81820">2-3</span>(1-0)</div><div style="left:348px;top:551px;width:41px;height:27px;background:#ffffff;border:1px solid #c0c0c0;line-height:27px;">6-5</div><div style="left:388px;top:551px;width:111px;height:27px;background:#ffffff;border:1px solid #c0c0c0;line-height:27px;"><span style="color:#1a821a"><span class="c">利恩比</span></span></div><div style="left:498px;top:551px;width:51px;height:27px;background:#fff9f5;border:1px solid #c0c0c0;line-height:27px;">0.83</div><div style="left:548px;top:551px;width:87px;height:27px;background:#fff9f5;border:1px solid #c0c0c0;line-height:27px;"><span class="c">平</span>/<span class="c">半</span></div><div style="left:634px;top:551px;width:54px;height:27px;background:#fff9f5;border:1px solid #c0c0c0;line-height:27px;">1.06</div><div style="left:687px;top:551px;width:78px;height:27px;background:#eff7fc;border:1px solid #c0c0c0;line-height:27px;">2.25</div><div style="left:764px;top:551px;width:64px;height:27px;background:#eff7fc;border:1px solid #c0c0c0;line-height:27px;">3.21</div><div style="left:827px;top:551px;width:65px;height:27px;background:#eff7fc;border:1px solid #c0c0c0;line-height:27px;">3.01</div><div style="left:891px;top:551px;width:40px;height:27px;background:#ffffff;border:1px solid #c0c0c0;line-height:27px;"><span style="color:#c81020"><span class="c">胜</span></span></div><div style="left:930px;top:551px;width:40px;height:27px;background:#ffffff;border:1px solid #c0c0c0;line-height:27px;"><span style="color:#c81020"><span class="c">赢</span></span></div><div style="left:969px;top:551px;width:61px;height:27px;background:#ffffff;border:1px solid #c0c0c0;line-height:27px;"><span style="color:#c81020"><span class="c">大</span></span></div><div style="left:83px;top:577px;width:79px;height:27px;background:#efefef;border:1px solid #c0c0c0;line-height:27px;">25-08-10</div><div style="left:2px;top:577px;width:82px;height:27px;background:#7b7bff;border:1px solid #c0c0c0;line-height:27px;color:#fff;border-color:#b8b8ee #7474e6 #b8b8ee #c4c4ee;"><span class="c">丹麦甲</span></div><div style="left:161px;top:577px;width:96px;height:27px;background:#efefef;border:1px solid #c0c0c0;line-height:27px;"><span style="color:#1a821a"><span class="c">利恩比</span></span></div><div style="left:256px;top:577px;width:93px;height:27px;background:#efefef;border:1px solid #c0c0c0;line-height:27px;"><span style="color:#b81820">1-2</span>(0-1)</div><div style="left:348px;top:577px;width:41px;height:27px;background:#efefef;border:1px solid #c0c0c0;line-height:27px;">7-9</div><div style="left:388px;top:577px;width:111px;height:27px;background:#efefef;border:1px solid #c0c0c0;line-height:27px;"><span class="c">哈维德夫</span></div><div style="left:498px;top:577px;width:51px;height:27px;background:#fff9f5;border:1px solid #c0c0c0;line-height:27px;">0.90</div><div style="left:548px;top:577px;width:87px;height:27px;background:#fff9f5;border:1px solid #c0c0c0;line-height:27px;"><span class="c">半</span>/<span class="c">一</span></div><div style="left:634px;top:577px;width:54px;height:27px;background:#fff9f5;border:1px solid #c0c0c0;line-height:27px;">0.99</div><div style="left:687px;top:577px;width:78px;height:27px;background:#eff7fc;border:1px solid #c0c0c0;line-height:27px;">1.63</div><div style="left:764px;top:577px;width:64px;height:27px;background:#eff7fc;border:1px solid #c0c0c0;line-height:27px;">3.70</div><div style="left:827px;top:577px;width:65px;height:27px;background:#eff7fc;border:1px solid #c0c0c0;line-height:27px;">4.90</div><div style="left:891px;top:577px;width:40px;height:27px;background:#efefef;border:1px solid #c0c0c0;line-height:27px;"><span style="color:#1515a0"><span class="c">负</span></span></div><div style="left:930px;top:577px;width:40px;height:27px;background:#efefef;border:1px solid #c0c0c0;line-height:27px;"><span style="color:#1515a0"><span class="c">输</span></span></div><div style="left:969px;top:577px;width:61px;height:27px;background:#efefef;border:1px solid #c0c0c0;line-height:27px;"><span style="color:#c81020"><span class="c">大</span></span></div><div style="left:83px;top:603px;width:79px;height:27px;background:#ffffff;border:1px solid #c0c0c0;line-height:27px;">25-08-06</div><div style="left:2px;top:603px;width:82px;height:27px;background:#8a87c0;border:1px solid #c0c0c0;line-height:27px;color:#fff;border-color:#b8b8ee #7c79b6 #b8b8ee #c4c4ee;"><span class="c">丹麦杯</span></div><div style="left:161px;top:603px;width:96px;height:27px;background:#ffffff;border:1px solid #c0c0c0;line-height:27px;"><b class="rc">1</b><span class="c">希尔星格</span></div><div style="left:256px;top:603px;width:93px;height:27px;background:#ffffff;border:1px solid #c0c0c0;line-height:27px;"><span style="color:#b81820">0-1</span>(0-1)</div><div style="left:348px;top:603px;width:41px;height:27px;background:#ffffff;border:1px solid #c0c0c0;line-height:27px;">4-13</div><div style="left:388px;top:603px;width:111px;height:27px;background:#ffffff;border:1px solid #c0c0c0;line-height:27px;"><span style="color:#1a821a"><span class="c">利恩比</span></span></div><div style="left:498px;top:603px;width:51px;height:27px;background:#fff9f5;border:1px solid #c0c0c0;line-height:27px;">0.82</div><div style="left:548px;top:603px;width:87px;height:27px;background:#fff9f5;border:1px solid #c0c0c0;line-height:27px;"><span class="c">受球半</span></div><div style="left:634px;top:603px;width:54px;height:27px;background:#fff9f5;border:1px solid #c0c0c0;line-height:27px;">1.00</div><div style="left:687px;top:603px;width:78px;height:27px;background:#eff7fc;border:1px solid #c0c0c0;line-height:27px;">6.77</div><div style="left:764px;top:603px;width:64px;height:27px;background:#eff7fc;border:1px solid #c0c0c0;line-height:27px;">5.11</div><div style="left:827px;top:603px;width:65px;height:27px;background:#eff7fc;border:1px solid #c0c0c0;line-height:27px;">1.34</div><div style="left:891px;top:603px;width:40px;height:27px;background:#ffffff;border:1px solid #c0c0c0;line-height:27px;"><span style="color:#c81020"><span class="c">胜</span></span></div><div style="left:930px;top:603px;width:40px;height:27px;background:#ffffff;border:1px solid #c0c0c0;line-height:27px;"><span style="color:#1515a0"><span class="c">输</span></span></div><div style="left:969px;top:603px;width:61px;height:27px;background:#ffffff;border:1px solid #c0c0c0;line-height:27px;"><span style="color:#1515a0"><span class="c">小</span></span></div><div style="left:83px;top:629px;width:79px;height:27px;background:#efefef;border:1px solid #c0c0c0;line-height:27px;">25-08-02</div><div style="left:2px;top:629px;width:82px;height:27px;background:#7b7bff;border:1px solid #c0c0c0;line-height:27px;color:#fff;border-color:#b8b8ee #7474e6 #b8b8ee #c4c4ee;"><span class="c">丹麦甲</span></div><div style="left:161px;top:629px;width:96px;height:27px;background:#efefef;border:1px solid #c0c0c0;line-height:27px;"><span class="c">奥胡斯费马</span></div><div style="left:256px;top:629px;width:93px;height:27px;background:#efefef;border:1px solid #c0c0c0;line-height:27px;"><span style="color:#b81820">0-2</span>(0-1)</div><div style="left:348px;top:629px;width:41px;height:27px;background:#efefef;border:1px solid #c0c0c0;line-height:27px;">9-4</div><div style="left:388px;top:629px;width:111px;height:27px;background:#efefef;border:1px solid #c0c0c0;line-height:27px;"><span style="color:#1a821a"><span class="c">利恩比</span></span></div><div style="left:498px;top:629px;width:51px;height:27px;background:#fff9f5;border:1px solid #c0c0c0;line-height:27px;">0.93</div><div style="left:548px;top:629px;width:87px;height:27px;background:#fff9f5;border:1px solid #c0c0c0;line-height:27px;"><span class="c">受平</span>/<span class="c">半</span></div><div style="left:634px;top:629px;width:54px;height:27px;background:#fff9f5;border:1px solid #c0c0c0;line-height:27px;">0.96</div><div style="left:687px;top:629px;width:78px;height:27px;background:#eff7fc;border:1px solid #c0c0c0;line-height:27px;">3.00</div><div style="left:764px;top:629px;width:64px;height:27px;background:#eff7fc;border:1px solid #c0c0c0;line-height:27px;">3.43</div><div style="left:827px;top:629px;width:65px;height:27px;background:#eff7fc;border:1px solid #c0c0c0;line-height:27px;">2.15</div><div style="left:891px;top:629px;width:40px;height:27px;background:#efefef;border:1px solid #c0c0c0;line-height:27px;"><span style="color:#c81020"><span class="c">胜</span></span></div><div style="left:930px;top:629px;width:40px;height:27px;background:#efefef;border:1px solid #c0c0c0;line-height:27px;"><span style="color:#c81020"><span class="c">赢</span></span></div><div style="left:969px;top:629px;width:61px;height:27px;background:#efefef;border:1px solid #c0c0c0;line-height:27px;"><span style="color:#1515a0"><span class="c">小</span></span></div><div style="left:83px;top:655px;width:79px;height:27px;background:#ffffff;border:1px solid #c0c0c0;line-height:27px;">25-07-26</div><div style="left:2px;top:655px;width:82px;height:27px;background:#7b7bff;border:1px solid #c0c0c0;line-height:27px;color:#fff;border-color:#b8b8ee #7474e6 #b8b8ee #c4c4ee;"><span class="c">丹麦甲</span></div><div style="left:161px;top:655px;width:96px;height:27px;background:#ffffff;border:1px solid #c0c0c0;line-height:27px;"><span style="color:#1a821a"><span class="c">利恩比</span></span></div><div style="left:256px;top:655px;width:93px;height:27px;background:#ffffff;border:1px solid #c0c0c0;line-height:27px;"><span style="color:#b81820">1-1</span>(0-1)</div><div style="left:348px;top:655px;width:41px;height:27px;background:#ffffff;border:1px solid #c0c0c0;line-height:27px;">6-3</div><div style="left:388px;top:655px;width:111px;height:27px;background:#ffffff;border:1px solid #c0c0c0;line-height:27px;">B93<span class="c">哥本哈根</span></div><div style="left:498px;top:655px;width:51px;height:27px;background:#fff9f5;border:1px solid #c0c0c0;line-height:27px;">0.94</div><div style="left:548px;top:655px;width:87px;height:27px;background:#fff9f5;border:1px solid #c0c0c0;line-height:27px;"><span class="c">一球</span></div><div style="left:634px;top:655px;width:54px;height:27px;background:#fff9f5;border:1px solid #c0c0c0;line-height:27px;">0.95</div><div style="left:687px;top:655px;width:78px;height:27px;background:#eff7fc;border:1px solid #c0c0c0;line-height:27px;">1.50</div><div style="left:764px;top:655px;width:64px;height:27px;background:#eff7fc;border:1px solid #c0c0c0;line-height:27px;">4.24</div><div style="left:827px;top:655px;width:65px;height:27px;background:#eff7fc;border:1px solid #c0c0c0;line-height:27px;">5.43</div><div style="left:891px;top:655px;width:40px;height:27px;background:#ffffff;border:1px solid #c0c0c0;line-height:27px;"><span style="color:#1a821a"><span class="c">平</span></span></div><div style="left:930px;top:655px;width:40px;height:27px;background:#ffffff;border:1px solid #c0c0c0;line-height:27px;"><span style="color:#1515a0"><span class="c">输</span></span></div><div style="left:969px;top:655px;width:61px;height:27px;background:#ffffff;border:1px solid #c0c0c0;line-height:27px;"><span style="color:#1515a0"><span class="c">小</span></span></div><div style="left:83px;top:681px;width:79px;height:27px;background:#efefef;border:1px solid #c0c0c0;line-height:27px;">25-07-20</div><div style="left:2px;top:681px;width:82px;height:27px;background:#7b7bff;border:1px solid #c0c0c0;line-height:27px;color:#fff;border-color:#b8b8ee #7474e6 #b8b8ee #c4c4ee;"><span class="c">丹麦甲</span></div><div style="left:161px;top:681px;width:96px;height:27px;background:#efefef;border:1px solid #c0c0c0;line-height:27px;"><span class="c">埃斯比约</span></div><div style="left:256px;top:681px;width:93px;height:27px;background:#efefef;border:1px solid #c0c0c0;line-height:27px;"><span style="color:#b81820">0-2</span>(0-1)</div><div style="left:348px;top:681px;width:41px;height:27px;background:#efefef;border:1px solid #c0c0c0;line-height:27px;">5-1</div><div style="left:388px;top:681px;width:111px;height:27px;background:#efefef;border:1px solid #c0c0c0;line-height:27px;"><span style="color:#1a821a"><span class="c">利恩比</span></span></div><div style="left:498px;top:681px;width:51px;height:27px;background:#fff9f5;border:1px solid #c0c0c0;line-height:27px;">1.01</div><div style="left:548px;top:681px;width:87px;height:27px;background:#fff9f5;border:1px solid #c0c0c0;line-height:27px;"><span class="c">平手</span></div><div style="left:634px;top:681px;width:54px;height:27px;background:#fff9f5;border:1px solid #c0c0c0;line-height:27px;">0.88</div><div style="left:687px;top:681px;width:78px;height:27px;background:#eff7fc;border:1px solid #c0c0c0;line-height:27px;">2.80</div><div style="left:764px;top:681px;width:64px;height:27px;background:#eff7fc;border:1px solid #c0c0c0;line-height:27px;">3.47</div><div style="left:827px;top:681px;width:65px;height:27px;background:#eff7fc;border:1px solid #c0c0c0;line-height:27px;">2.28</div><div style="left:891px;top:681px;width:40px;height:27px;background:#efefef;border:1px solid #c0c0c0;line-height:27px;"><span style="color:#c81020"><span class="c">胜</span></span></div><div style="left:930px;top:681px;width:40px;height:27px;background:#efefef;border:1px solid #c0c0c0;line-height:27px;"><span style="color:#c81020"><span class="c">赢</span></span></div><div style="left:969px;top:681px;width:61px;height:27px;background:#efefef;border:1px solid #c0c0c0;line-height:27px;"><span style="color:#1515a0"><span class="c">小</span></span></div><div style="left:2px;top:707px;width:1028px;height:27px;background:#fff;border:1px solid #c0c0c0;line-height:27px;letter-spacing:0.18px;"><span class="c">近</span><span style="color:#c81020">10</span><span class="c">场</span>,<span class="c">胜</span>4<span class="c">平</span>4<span class="c">负</span>2, <span class="c">胜率</span>:<span style="color:#c81020">40%</span> <span class="c">让胜率</span>:<span style="color:#c81020">33.3%</span> <span class="c">大率</span>:<span style="color:#c81020">44.4%</span> <span class="c">单率</span>:<span style="color:#c81020">40%</span></div><div class="t" style="left:380px;top:389px;"><span class="c">近</span></div><div class="sel sm" style="left:396px;top:389px;width:38px;height:17px;"><span class="st"><span class="mono">10</span></span><svg class="chev" width="10" height="7" viewBox="0 0 10 7"><path d="M1 1.3 L5 5.2 L9 1.3" stroke="#000" stroke-width="2.2" fill="none"/></svg></div><div class="t" style="left:438px;top:389px;"><span class="c">场</span></div><div class="cb" style="left:454px;top:389px;"></div><div class="t" style="left:471px;top:389px;"><span class="c">同客</span></div><div class="cb on" style="left:499px;top:389px;"><svg width="13" height="13" viewBox="0 0 13 13"><path d="M2.5 7 L5.3 9.5 L10.3 3.2" stroke="#fff" stroke-width="2.1" fill="none"/></svg></div><div class="t" style="left:512px;top:389px;"><span class="c">丹麦杯</span></div><div class="cb on" style="left:547px;top:389px;"><svg width="13" height="13" viewBox="0 0 13 13"><path d="M2.5 7 L5.3 9.5 L10.3 3.2" stroke="#fff" stroke-width="2.1" fill="none"/></svg></div><div class="t" style="left:560px;top:389px;"><span class="c">丹麦甲</span></div><div class="cb on" style="left:596px;top:389px;"><svg width="13" height="13" viewBox="0 0 13 13"><path d="M2.5 7 L5.3 9.5 L10.3 3.2" stroke="#fff" stroke-width="2.1" fill="none"/></svg></div><div class="t" style="left:609px;top:389px;"><span class="c">球会友谊</span></div><div class="cb on" style="left:657px;top:389px;"><svg width="13" height="13" viewBox="0 0 13 13"><path d="M2.5 7 L5.3 9.5 L10.3 3.2" stroke="#fff" stroke-width="2.1" fill="none"/></svg></div><div class="t" style="left:670px;top:389px;"><span class="c">丹麦超</span></div><div class="sel" style="left:533px;top:409px;width:60px;height:19px;"><span class="st">Crow*</span><svg class="chev" width="10" height="7" viewBox="0 0 10 7"><path d="M1 1.3 L5 5.2 L9 1.3" stroke="#000" stroke-width="2.2" fill="none"/></svg></div><div class="sel" style="left:601px;top:409px;width:51px;height:19px;"><span class="st"><span class="c">终指</span></span><svg class="chev" width="10" height="7" viewBox="0 0 10 7"><path d="M1 1.3 L5 5.2 L9 1.3" stroke="#000" stroke-width="2.2" fill="none"/></svg></div><div class="sel" style="left:725px;top:409px;width:70px;height:19px;"><span class="st"><span class="c">平均值</span></span><svg class="chev" width="10" height="7" viewBox="0 0 10 7"><path d="M1 1.3 L5 5.2 L9 1.3" stroke="#000" stroke-width="2.2" fill="none"/></svg></div><div class="sel" style="left:802px;top:409px;width:51px;height:19px;"><span class="st"><span class="c">终指</span></span><svg class="chev" width="10" height="7" viewBox="0 0 10 7"><path d="M1 1.3 L5 5.2 L9 1.3" stroke="#000" stroke-width="2.2" fill="none"/></svg></div><div class="sel" style="left:935px;top:409px;width:51px;height:19px;"><span class="st"><span class="c">全场</span></span><svg class="chev" width="10" height="7" viewBox="0 0 10 7"><path d="M1 1.3 L5 5.2 L9 1.3" stroke="#000" stroke-width="2.2" fill="none"/></svg></div>
</body></html>
